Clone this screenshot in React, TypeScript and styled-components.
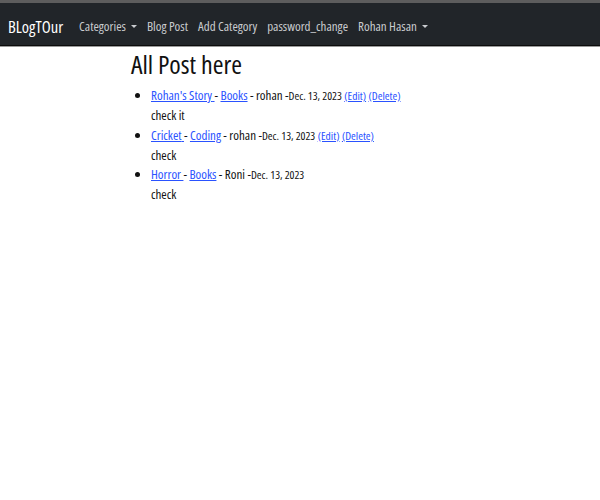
import styled, { createGlobalStyle } from "styled-components";

const GlobalStyle = createGlobalStyle`
  body {
    margin: 0;
    background: #fff;
    font-family: "Open Sans", "Noto Sans", sans-serif;
    font-stretch: condensed;
    color: #212529;
  }
`;

const NavBar = styled.nav`
  display: flex;
  align-items: center;
  box-sizing: border-box;
  height: 46px;
  padding: 4px 8px 0;
  background: #212529;
  border-top: 3px solid #5d5d5d;
  border-bottom: 1px solid #0c0c0c;
  box-shadow: 0 1px 0 #9a9a9a;
`;

const Brand = styled.a`
  color: #fff;
  font-size: 16.5px;
  font-weight: 500;
  margin-right: 11px;
  text-decoration: none;
`;

const NavLink = styled.a`
  display: flex;
  align-items: center;
  gap: 5px;
  padding: 0 5px;
  color: #c9cccf;
  font-size: 13px;
  text-decoration: none;
`;

const Caret = styled.span`
  width: 0;
  height: 0;
  border-left: 3px solid transparent;
  border-right: 3px solid transparent;
  border-top: 3px solid #c9cccf;
`;

const Main = styled.main`
  padding-left: 131px;
`;

const Heading = styled.h1`
  margin: 3px 0 6px;
  font-size: 26px;
  font-weight: 400;
  line-height: 1.2;
  color: #111;
`;

const PostList = styled.ul`
  margin: 0;
  padding-left: 20px;
  font-size: 13px;
  line-height: 19.8px;
  color: #111;
`;

const PostLink = styled.a`
  color: #2a52ff;
  text-decoration: underline;
`;

const Small = styled.small`
  font-size: 11.5px;
`;

const posts = [
  { title: "Rohan's Story", category: "Books", author: "rohan", body: "check it", own: true },
  { title: "Cricket", category: "Coding", author: "rohan", body: "check", own: true },
  { title: "Horror", category: "Books", author: "Roni", body: "check", own: false },
];

export default function App() {
  return (
    <>
      <GlobalStyle />
      <NavBar>
        <Brand href="#">BLogTOur</Brand>
        <NavLink href="#">Categories<Caret /></NavLink>
        <NavLink href="#">Blog Post</NavLink>
        <NavLink href="#">Add Category</NavLink>
        <NavLink href="#">password_change</NavLink>
        <NavLink href="#">Rohan Hasan<Caret /></NavLink>
      </NavBar>
      <Main>
        <Heading>All Post here</Heading>
        <PostList>
          {posts.map((p) => (
            <li key={p.title}>
              <PostLink href="#">{p.title} </PostLink> - <PostLink href="#">{p.category}</PostLink> - {p.author} -
              <Small>Dec. 13, 2023</Small>
              {p.own && (
                <>
                  {" "}
                  <Small><PostLink href="#">(Edit)</PostLink></Small>{" "}
                  <Small><PostLink href="#">(Delete)</PostLink></Small>
                </>
              )}
              <br />
              {p.body}
            </li>
          ))}
        </PostList>
      </Main>
    </>
  );
}
